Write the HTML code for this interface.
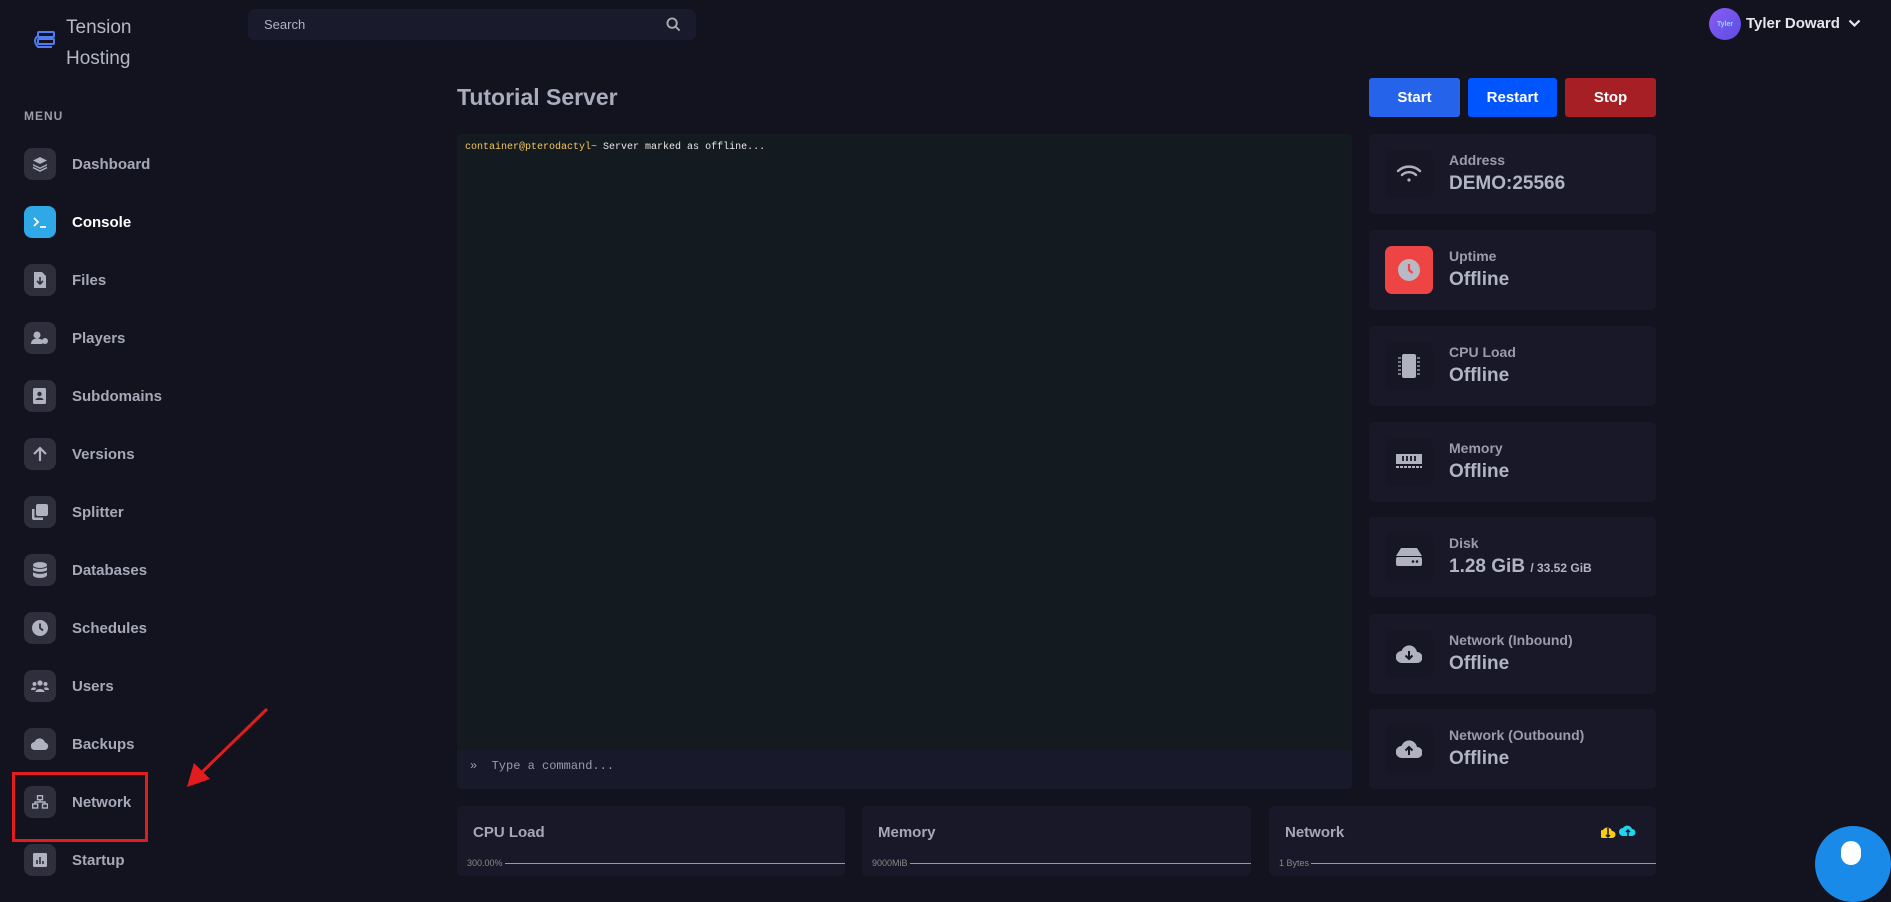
<!DOCTYPE html>
<html><head><meta charset="utf-8"><style>
*{box-sizing:border-box;margin:0;padding:0}
body{width:1891px;height:865px;overflow:hidden;background:#13131f;font-family:"Liberation Sans",sans-serif;color:#a9acbc;position:relative}
.abs{position:absolute}
.nav{position:absolute;left:24px;height:34px;display:flex;align-items:center}
.nav .ic{width:32px;height:32px;border-radius:8px;background:#2e2e3c;display:flex;align-items:center;justify-content:center}
.nav span{margin-left:16px;font-size:15px;font-weight:bold;color:#a6a8b8}
.card{position:absolute;left:1369px;width:287px;height:80px;background:#181828;border-radius:5px}
.card .ib{position:absolute;left:16px;top:16px;width:48px;height:48px;border-radius:7px;display:flex;align-items:center;justify-content:center}
.card .l{position:absolute;left:80px;top:18px;font-size:14px;font-weight:bold;color:#9a9cac}
.card .v{position:absolute;left:80px;top:39px;font-size:19px;font-weight:bold;color:#b2b4c2}
.btn{position:absolute;top:78px;height:39px;border-radius:3px;color:#fff;font-weight:bold;font-size:15px;display:flex;align-items:center;justify-content:center}
.ch{position:absolute;top:806px;height:70px;background:#181828;border-radius:5px}
.ch .t{position:absolute;left:16px;top:18px;font-size:15px;font-weight:bold;color:#a6a8b8}
.ch .ax{position:absolute;left:10px;top:52px;font-size:9px;color:#888;display:flex;align-items:center;width:calc(100% - 10px)}
.ch .ax i{flex:1;height:1px;background:#999;margin-left:2px}
</style></head><body>
<svg class="abs" style="left:32px;top:30px" width="24" height="20" viewBox="0 0 24 20"><rect x="6" y="2" width="16" height="5" rx="1" fill="none" stroke="#4f7df0" stroke-width="2"/><rect x="6" y="9" width="16" height="5" rx="1" fill="none" stroke="#4f7df0" stroke-width="2"/><path d="M6 6 Q0 10 6 17 H20" fill="none" stroke="#4f7df0" stroke-width="2"/></svg>
<div class="abs" style="left:66px;top:12px;font-size:19px;color:#b5b7c6;line-height:31px">Tension<br>Hosting</div>
<div class="abs" style="left:248px;top:9px;width:448px;height:31px;background:#191a2c;border-radius:6px"><span class="abs" style="left:16px;top:8px;font-size:13px;color:#b0b2c0">Search</span>
<svg class="abs" style="left:418px;top:8px" width="15" height="15" viewBox="0 0 16 16"><circle cx="6.5" cy="6.5" r="5" fill="none" stroke="#aaa" stroke-width="2"/><path d="M10 10l4.5 4.5" stroke="#aaa" stroke-width="2"/></svg></div>
<div class="abs" style="left:24px;top:109px;font-size:12px;font-weight:bold;color:#9a9cab;letter-spacing:1px">MENU</div>

<div class="nav" style="top:147px"><div class="ic"><svg width="16" height="16" viewBox="0 0 16 16" fill="#b0b2c0"><path d="M8 1l7 3.5-7 3.5-7-3.5z"/><path d="M1 8l7 3.5 7-3.5v1.5l-7 3.5-7-3.5z"/><path d="M1 11.5l7 3.5 7-3.5" stroke="#b0b2c0" fill="none" stroke-width="1.5"/></svg></div><span>Dashboard</span></div>
<div class="nav" style="top:205px"><div class="ic" style="background:#2ea8e6"><svg width="16" height="16" viewBox="0 0 16 16"><path d="M2 4l4 4-4 4M8 13h6" stroke="#fff" stroke-width="1.8" fill="none"/></svg></div><span style="color:#fff">Console</span></div>
<div class="nav" style="top:263px"><div class="ic"><svg width="12" height="16" viewBox="0 0 12 16"><path d="M0 0h8l4 4v12H0z" fill="#b0b2c0"/><path d="M6 5v7M3 9l3 3 3-3" stroke="#2e2e3c" stroke-width="1.6" fill="none"/></svg></div><span>Files</span></div>
<div class="nav" style="top:321px"><div class="ic"><svg width="18" height="14" viewBox="0 0 18 14" fill="#b0b2c0"><circle cx="6" cy="4" r="3.5"/><path d="M0 13c0-4 3-5.5 6-5.5s5 1 5.5 2V13z"/><circle cx="14" cy="10" r="3"/></svg></div><span>Players</span></div>
<div class="nav" style="top:379px"><div class="ic"><svg width="14" height="16" viewBox="0 0 14 16"><rect x="0" y="0" width="13" height="16" rx="1.5" fill="#b0b2c0"/><circle cx="6.5" cy="6" r="2.2" fill="#2e2e3c"/><path d="M2.5 12c0-3 8-3 8 0z" fill="#2e2e3c"/></svg></div><span>Subdomains</span></div>
<div class="nav" style="top:437px"><div class="ic"><svg width="16" height="16" viewBox="0 0 16 16"><path d="M8 15V2M2 8l6-6 6 6" stroke="#b0b2c0" stroke-width="2.2" fill="none"/></svg></div><span>Versions</span></div>
<div class="nav" style="top:495px"><div class="ic"><svg width="16" height="16" viewBox="0 0 16 16" fill="#b0b2c0"><rect x="4" y="0" width="12" height="12" rx="2"/><path d="M0 5h2.5v8.5H11V16H2a2 2 0 0 1-2-2z"/></svg></div><span>Splitter</span></div>
<div class="nav" style="top:553px"><div class="ic"><svg width="14" height="16" viewBox="0 0 14 16" fill="#b0b2c0"><ellipse cx="7" cy="3" rx="7" ry="3"/><path d="M0 5c2 2.5 12 2.5 14 0v3c-2 2.5-12 2.5-14 0zM0 10c2 2.5 12 2.5 14 0v3c0 1.6-3 3-7 3s-7-1.4-7-3z"/></svg></div><span>Databases</span></div>
<div class="nav" style="top:611px"><div class="ic"><svg width="16" height="16" viewBox="0 0 16 16"><circle cx="8" cy="8" r="8" fill="#b0b2c0"/><path d="M8 3.5V8l3 2.5" stroke="#2e2e3c" stroke-width="1.8" fill="none"/></svg></div><span>Schedules</span></div>
<div class="nav" style="top:669px"><div class="ic"><svg width="18" height="12" viewBox="0 0 18 12" fill="#b0b2c0"><circle cx="9" cy="3" r="2.6"/><circle cx="3.5" cy="4" r="2"/><circle cx="14.5" cy="4" r="2"/><path d="M4.5 12c0-4 9-4 9 0zM0 10c0-3 4-3 5-2l-1 2zM18 10c0-3-4-3-5-2l1 2z"/></svg></div><span>Users</span></div>
<div class="nav" style="top:727px"><div class="ic"><svg width="18" height="12" viewBox="0 0 18 12" fill="#b0b2c0"><path d="M4 12a4 4 0 0 1-.5-8A5.5 5.5 0 0 1 14 4.5a3.8 3.8 0 0 1 0 7.5z"/></svg></div><span>Backups</span></div>
<div class="nav" style="top:785px"><div class="ic"><svg width="16" height="14" viewBox="0 0 16 14" fill="none" stroke="#b0b2c0" stroke-width="1.4"><rect x="5.5" y="0.7" width="5" height="4"/><rect x="0.7" y="9" width="5" height="4"/><rect x="10.5" y="9" width="5" height="4"/><path d="M8 4.7V7M3 9V7h10v2"/></svg></div><span>Network</span></div>
<div class="nav" style="top:843px"><div class="ic"><svg width="14" height="14" viewBox="0 0 14 14"><rect width="14" height="14" rx="1.5" fill="#b0b2c0"/><path d="M4 11V7M7 11V4M10 11V8" stroke="#2e2e3c" stroke-width="1.6"/></svg></div><span>Startup</span></div>

<div class="abs" style="left:12px;top:772px;width:136px;height:70px;border:3px solid #e11d1d"></div>
<svg class="abs" style="left:180px;top:700px" width="100" height="100"><path d="M87 9L16 78" stroke="#e11d1d" stroke-width="3"/><path d="M7 87l7-24 16 16z" fill="#e11d1d"/></svg>

<div class="abs" style="left:1709px;top:8px;width:32px;height:32px;border-radius:50%;background:linear-gradient(135deg,#8a5cf6,#5b4de0);font-size:7px;font-weight:bold;color:#7de0ff;display:flex;align-items:center;justify-content:center">Tyler</div>
<div class="abs" style="left:1746px;top:15px;font-size:15px;font-weight:bold;color:#e6e7ee">Tyler Doward</div>
<svg class="abs" style="left:1848px;top:19px" width="13" height="9"><path d="M1.5 1.5l5 5 5-5" stroke="#e6e7ee" stroke-width="2.2" fill="none"/></svg>

<div class="abs" style="left:457px;top:84px;font-size:23px;font-weight:bold;color:#a9acbd">Tutorial Server</div>
<div class="btn" style="left:1369px;width:91px;background:#2563eb">Start</div>
<div class="btn" style="left:1468px;width:89px;background:#0055ff">Restart</div>
<div class="btn" style="left:1565px;width:91px;background:#a61f24">Stop</div>

<div class="abs" style="left:457px;top:134px;width:895px;height:655px;background:#181a2b;border-radius:4px;overflow:hidden">
<div style="height:616px;background:#131a20;padding:8px 0 0 8px;font-family:'Liberation Mono',monospace;font-size:10px"><span style="color:#f6c658">container@pterodactyl~</span> <span style="color:#e8e8e8">Server marked as offline...</span></div>
<div class="abs" style="left:13px;top:625px;font-family:'Liberation Mono',monospace;font-size:12px;color:#9a9cab">» &nbsp;Type a command...</div>
</div>

<div class="card" style="top:134px"><div class="ib" style="background:#161625"><svg width="26" height="20" viewBox="0 0 26 20" fill="none" stroke="#b0b2c0" stroke-width="2.4" stroke-linecap="round"><path d="M2 7a16 16 0 0 1 22 0M6 11a10 10 0 0 1 14 0"/><circle cx="13" cy="16" r="1.6" fill="#b0b2c0" stroke="none"/></svg></div><div class="l">Address</div><div class="v">DEMO:25566</div></div>
<div class="card" style="top:230px"><div class="ib" style="background:#ef4444"><svg width="22" height="22" viewBox="0 0 22 22"><circle cx="11" cy="11" r="11" fill="#b7b9c5"/><path d="M11 5v6l3.5 3" stroke="#ef4444" stroke-width="2.2" fill="none"/></svg></div><div class="l">Uptime</div><div class="v">Offline</div></div>
<div class="card" style="top:326px"><div class="ib" style="background:#161625"><svg width="24" height="26" viewBox="0 0 24 26" fill="#b0b2c0"><rect x="5" y="1" width="14" height="24" rx="2"/><path d="M1 5h3M1 9h3M1 13h3M1 17h3M1 21h3M20 5h3M20 9h3M20 13h3M20 17h3M20 21h3" stroke="#b0b2c0" stroke-width="1.2"/></svg></div><div class="l">CPU Load</div><div class="v">Offline</div></div>
<div class="card" style="top:422px"><div class="ib" style="background:#161625"><svg width="26" height="16" viewBox="0 0 26 16"><rect x="0" y="0" width="26" height="10" fill="#b0b2c0"/><path d="M7 2v5M11 2v5M15 2v5M19 2v5" stroke="#161625" stroke-width="1.8"/><path d="M0 13h26" stroke="#b0b2c0" stroke-width="2" stroke-dasharray="3 1"/></svg></div><div class="l">Memory</div><div class="v">Offline</div></div>
<div class="card" style="top:517px"><div class="ib" style="background:#161625"><svg width="26" height="18" viewBox="0 0 26 18"><path d="M5 0h16l5 8H0z" fill="#b0b2c0"/><rect x="0" y="9" width="26" height="9" rx="2" fill="#b0b2c0"/><circle cx="17" cy="13.5" r="1.3" fill="#161625"/><circle cx="21" cy="13.5" r="1.3" fill="#161625"/></svg></div><div class="l">Disk</div><div class="v">1.28 GiB <span style="font-size:12px">/ 33.52 GiB</span></div></div>
<div class="card" style="top:614px"><div class="ib" style="background:#161625"><svg width="26" height="18" viewBox="0 0 26 18"><path d="M6 18a6 6 0 0 1-.5-12A8 8 0 0 1 21 7a5.5 5.5 0 0 1 0 11z" fill="#b0b2c0"/><path d="M13 6v8M9.5 10.5l3.5 3.5 3.5-3.5" stroke="#161625" stroke-width="2" fill="none"/></svg></div><div class="l">Network (Inbound)</div><div class="v">Offline</div></div>
<div class="card" style="top:709px"><div class="ib" style="background:#161625"><svg width="26" height="18" viewBox="0 0 26 18"><path d="M6 18a6 6 0 0 1-.5-12A8 8 0 0 1 21 7a5.5 5.5 0 0 1 0 11z" fill="#b0b2c0"/><path d="M13 15V7M9.5 10.5L13 7l3.5 3.5" stroke="#161625" stroke-width="2" fill="none"/></svg></div><div class="l">Network (Outbound)</div><div class="v">Offline</div></div>

<div class="ch" style="left:457px;width:388px"><div class="t">CPU Load</div><div class="ax">300.00%<i></i></div></div>
<div class="ch" style="left:862px;width:389px"><div class="t">Memory</div><div class="ax">9000MiB<i></i></div></div>
<div class="ch" style="left:1269px;width:387px"><div class="t">Network</div><div class="ax">1 Bytes<i></i></div>
<svg class="abs" style="left:332px;top:18px" width="40" height="16"><path d="M2 14a4 4 0 0 1 0-8 5 5 0 0 1 9 1 3.5 3.5 0 0 1 0 7z" fill="#facc15"/><path d="M7 4v9M5 11l2 2 2-2" stroke="#181828" stroke-width="1.5" fill="none"/><path d="M22 12a4 4 0 0 1 0-8 5 5 0 0 1 9 1 3.5 3.5 0 0 1 0 7z" fill="#22d3ee"/><path d="M27 16V6M25 8l2-2 2 2" stroke="#181828" stroke-width="1.5" fill="none"/></svg></div>

<div class="abs" style="left:1815px;top:826px;width:76px;height:76px;border-radius:50%;background:#1a8ae8"><div class="abs" style="left:26px;top:15px;width:20px;height:24px;border-radius:10px;background:#fff"></div></div>
</body></html>
